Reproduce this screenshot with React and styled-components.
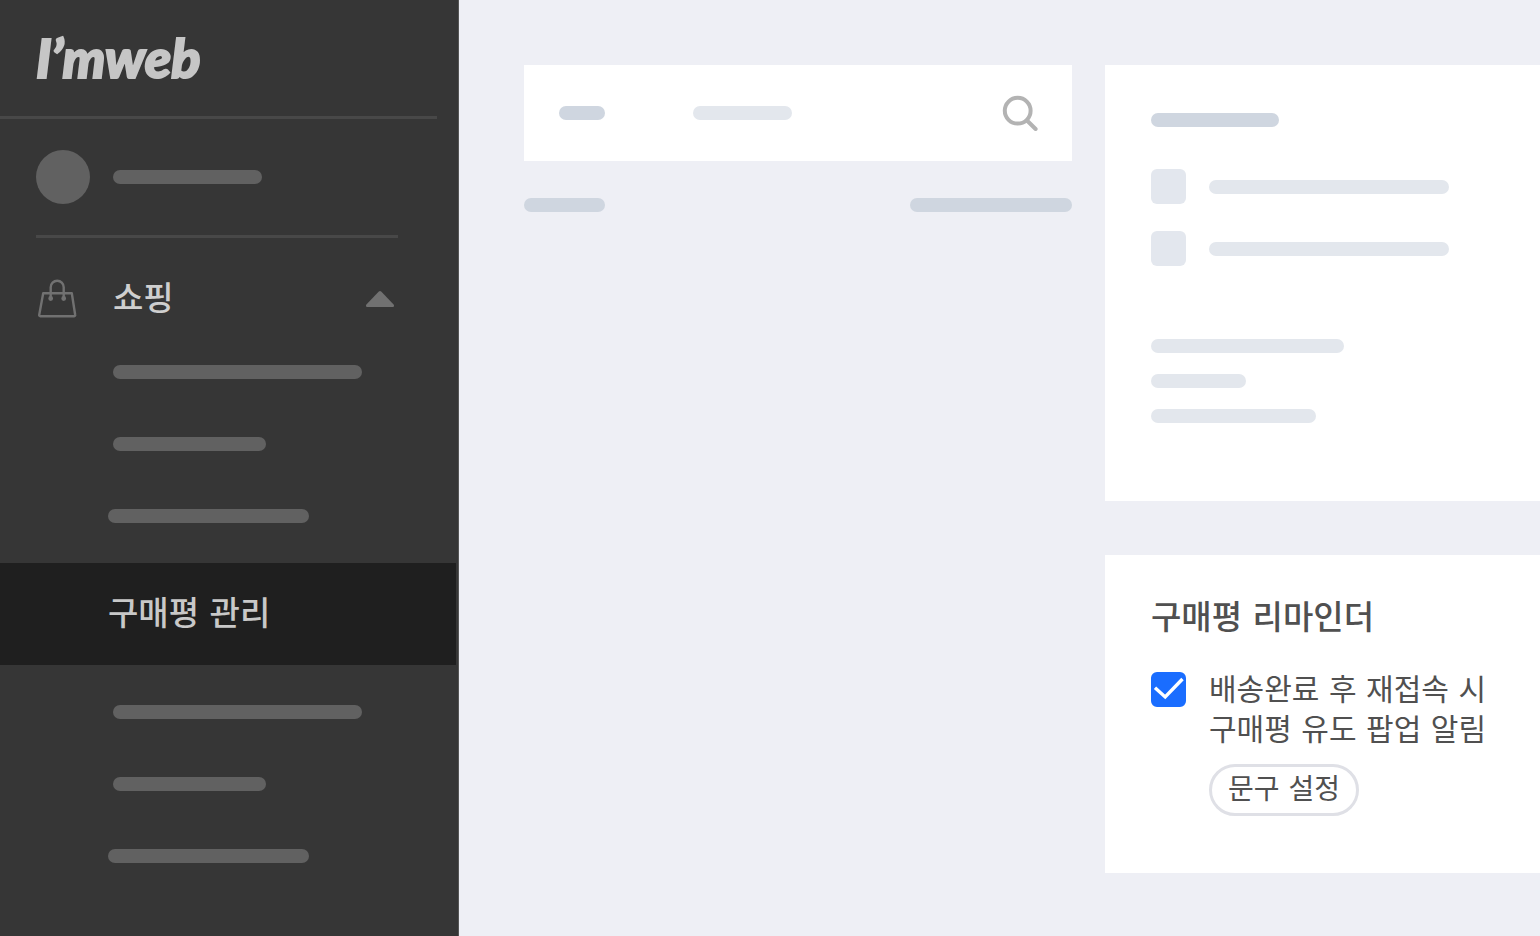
import React, { useState } from 'react';
import styled, { createGlobalStyle } from 'styled-components';

const GlobalStyle = createGlobalStyle`
  * {
    box-sizing: border-box;
  }

  body {
    margin: 0;
    background: #eeeff5;
    font-family: 'DejaVu Sans', 'Noto Sans CJK KR', sans-serif;
  }

  ul, h1, h2, p {
    margin: 0;
    padding: 0;
    list-style: none;
  }

  button {
    padding: 0;
    border: 0;
    background: none;
    color: inherit;
    font: inherit;
    cursor: pointer;
  }
`;

const menuBefore = [
  { indent: 113, width: 249 },
  { indent: 113, width: 153 },
  { indent: 108, width: 201 },
];

const menuAfter = [
  { indent: 113, width: 249 },
  { indent: 113, width: 153 },
  { indent: 108, width: 201 },
];

const BagIcon = () => (
  <svg width="40" height="40" viewBox="0 0 40 40" fill="none" stroke="#717171" strokeWidth="2.4" strokeLinejoin="round" aria-hidden="true">
    <path d="M6.2 14.2H34.8L38.2 36a1 1 0 0 1-1 1.2H3.2a1 1 0 0 1-1-1.2Z" />
    <path d="M13.7 19V8.3a6.5 6.5 0 0 1 13 0V19" />
    <circle cx="13.7" cy="19.5" r="1.2" fill="#717171" />
    <circle cx="26.7" cy="19.5" r="1.2" fill="#717171" />
  </svg>
);

const ArrowIcon = () => (
  <svg width="28" height="16" viewBox="0 0 28 16" aria-hidden="true">
    <path d="M12.8.6a1.8 1.8 0 0 1 2.4 0L27.6 13.6c.9 1 .3 2.4-1 2.4H1.4C.1 16-.5 14.6.4 13.6Z" fill="#717171" />
  </svg>
);

const SearchIcon = () => (
  <svg width="36" height="36" viewBox="0 0 36 36" fill="none" stroke="#b3b3b3" strokeWidth="4" aria-hidden="true">
    <circle cx="15.7" cy="15.7" r="12.9" />
    <path d="M25 25.5L33.6 34" strokeLinecap="round" />
  </svg>
);

const CheckIcon = () => (
  <svg width="35" height="35" viewBox="0 0 35 35" fill="none" stroke="#fff" strokeWidth="3.4" aria-hidden="true">
    <path d="M4 15.8L14.2 25L31.5 7" />
  </svg>
);

const MenuBars = ({ items }) => (
  <MenuGroup>
    {items.map((item, index) => (
      <MenuItem key={index} $indent={item.indent}>
        <Bar $width={item.width} $tone="dark" />
      </MenuItem>
    ))}
  </MenuGroup>
);

const App = () => {
  const [open, setOpen] = useState(true);
  const [reminder, setReminder] = useState(true);

  return (
    <Page>
      <GlobalStyle />
      <Sidebar>
        <Brand>
          <Logo href="#">I’mweb</Logo>
        </Brand>
        <Profile>
          <Avatar />
          <Bar $width={149} $tone="dark" />
        </Profile>
        <nav>
          <MenuHead type="button" aria-expanded={open} onClick={() => setOpen(!open)}>
            <BagIcon />
            <MenuHeadText>쇼핑</MenuHeadText>
            <ArrowIcon />
          </MenuHead>
          {open && (
            <MenuList>
              <MenuBars items={menuBefore} />
              <ActiveLink href="#" aria-current="page">구매평 관리</ActiveLink>
              <MenuBars items={menuAfter} />
            </MenuList>
          )}
        </nav>
      </Sidebar>

      <Main>
        <Column>
          <SearchCard>
            <Bar $width={46} $tone="mid" />
            <Bar $width={99} />
            <SearchButton type="button" aria-label="검색">
              <SearchIcon />
            </SearchButton>
          </SearchCard>
          <ListHead>
            <Bar $width={81} $tone="mid" />
            <Bar $width={162} $tone="mid" />
          </ListHead>
        </Column>

        <SideColumn>
          <SummaryCard>
            <Bar $width={128} $tone="mid" />
            <Options>
              <Option>
                <Square />
                <Bar $width={240} />
              </Option>
              <Option>
                <Square />
                <Bar $width={240} />
              </Option>
            </Options>
            <Lines>
              <Bar $width={193} />
              <Bar $width={95} />
              <Bar $width={165} />
            </Lines>
          </SummaryCard>

          <ReminderCard>
            <Title>구매평 리마인더</Title>
            <Setting>
              <CheckWrap>
                <Checkbox
                  id="reminder"
                  type="checkbox"
                  checked={reminder}
                  onChange={(e) => setReminder(e.target.checked)}
                />
                {reminder && <CheckIcon />}
              </CheckWrap>
              <div>
                <Label htmlFor="reminder">
                  배송완료 후 재접속 시<br />
                  구매평 유도 팝업 알림
                </Label>
                <PillButton type="button">문구 설정</PillButton>
              </div>
            </Setting>
          </ReminderCard>
        </SideColumn>
      </Main>
    </Page>
  );
};

export default App;

const tones = {
  dark: '#616161',
  mid: '#cfd6e0',
  light: '#e3e7ed',
};

const Page = styled.div`
  display: flex;
  min-height: 100vh;
`;

const Bar = styled.div`
  flex: none;
  width: ${({ $width }) => $width}px;
  max-width: 100%;
  height: 14px;
  border-radius: 7px;
  background: ${({ $tone }) => tones[$tone || 'light']};
`;

const Sidebar = styled.aside`
  flex: none;
  width: 459px;
  border-right: 1px solid #565656;
  background: #363636;
  color: #cfcfcf;
`;

const Brand = styled.div`
  display: flex;
  align-items: center;
  height: 119px;
  margin-right: 21px;
  padding-left: 36px;
  border-bottom: 3px solid #484848;
`;

const Logo = styled.a`
  color: #c6c6c6;
  font-family: Lato, 'Liberation Sans', sans-serif;
  font-size: 54px;
  font-style: italic;
  font-weight: 900;
  line-height: 56px;
  text-decoration: none;
  -webkit-text-stroke: 2px #c6c6c6;
  stroke-linejoin: round;
`;

const Profile = styled.div`
  display: flex;
  align-items: center;
  gap: 23px;
  margin: 0 60px 0 36px;
  padding: 31px 0;
  border-bottom: 3px solid #484848;
`;

const Avatar = styled.div`
  width: 54px;
  height: 54px;
  border-radius: 50%;
  background: #616161;
`;

const MenuHead = styled.button`
  display: flex;
  align-items: center;
  width: 100%;
  height: 121px;
  padding: 0 64px 0 37px;
`;

const MenuHeadText = styled.span`
  flex: 1;
  padding-left: 36px;
  font-size: 33px;
  font-weight: 500;
  line-height: 40px;
  text-align: left;
`;

const MenuList = styled.div`
  display: flex;
  flex-direction: column;
  gap: 40px;
  padding: 6px 0 40px;
`;

const MenuGroup = styled.ul`
  display: flex;
  flex-direction: column;
  gap: 58px;
`;

const MenuItem = styled.li`
  padding-left: ${({ $indent }) => $indent}px;
`;

const ActiveLink = styled.a`
  display: flex;
  align-items: center;
  height: 102px;
  margin-right: 2px;
  padding-left: 108px;
  background: #1f1f1f;
  color: #c8c8c8;
  font-size: 33px;
  font-weight: 500;
  line-height: 40px;
  text-decoration: none;
`;

const Main = styled.main`
  flex: 1;
  display: grid;
  grid-template-columns: 1fr 435px;
  gap: 33px;
  align-items: start;
  padding: 65px 0 63px 65px;
`;

const Column = styled.div`
  display: flex;
  flex-direction: column;
  gap: 37px;
`;

const SideColumn = styled.div`
  display: flex;
  flex-direction: column;
  gap: 54px;
`;

const Card = styled.section`
  background: #fff;
`;

const SearchCard = styled(Card)`
  display: flex;
  align-items: center;
  gap: 88px;
  height: 96px;
  padding: 0 34px 0 35px;
`;

const SearchButton = styled.button`
  display: flex;
  margin-left: auto;
`;

const ListHead = styled.div`
  display: flex;
  justify-content: space-between;
`;

const SummaryCard = styled(Card)`
  padding: 48px 46px 78px;
`;

const Options = styled.div`
  display: flex;
  flex-direction: column;
  gap: 27px;
  margin-top: 42px;
`;

const Option = styled.div`
  display: flex;
  align-items: center;
  gap: 23px;
`;

const Square = styled.div`
  width: 35px;
  height: 35px;
  border-radius: 6px;
  background: #e3e7ee;
`;

const Lines = styled.div`
  display: flex;
  flex-direction: column;
  gap: 21px;
  margin-top: 73px;
`;

const ReminderCard = styled(Card)`
  padding: 43px 46px 57px;
`;

const Title = styled.h2`
  color: #505050;
  font-size: 33px;
  font-weight: 500;
  line-height: 40px;
`;

const Setting = styled.div`
  display: flex;
  align-items: flex-start;
  gap: 23px;
  margin-top: 32px;
`;

const CheckWrap = styled.div`
  position: relative;
  flex: none;
  width: 35px;
  height: 35px;
  margin-top: 2px;

  svg {
    position: absolute;
    top: 0;
    left: 0;
    pointer-events: none;
  }
`;

const Checkbox = styled.input`
  appearance: none;
  display: block;
  width: 100%;
  height: 100%;
  margin: 0;
  border: 2px solid #dfe0e6;
  border-radius: 6px;
  background: #fff;

  &:checked {
    border-color: #1a6dff;
    background: #1a6dff;
  }
`;

const Label = styled.label`
  display: block;
  color: #505050;
  font-size: 30px;
  line-height: 40px;
  white-space: nowrap;
`;

const PillButton = styled.button`
  height: 52px;
  margin-top: 14px;
  padding: 0 16px;
  border: 3px solid #dfe0e6;
  border-radius: 26px;
  color: #505050;
  font-size: 28px;
  line-height: 40px;
`;
